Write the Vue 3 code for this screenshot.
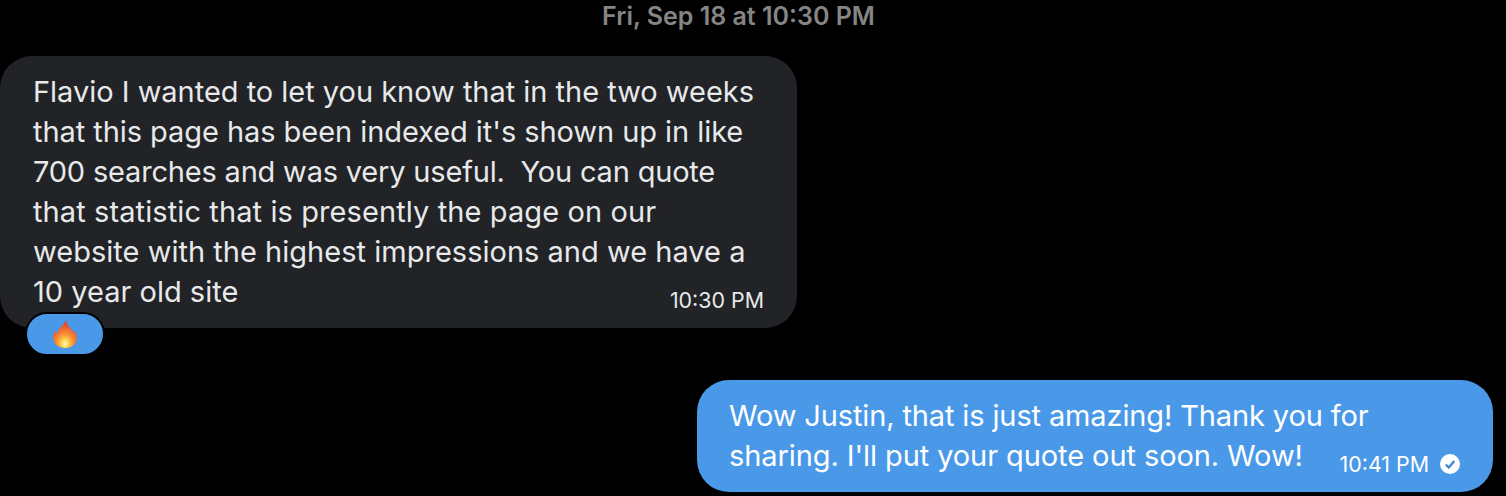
<script setup>
// tracking nudges per line, Inter runs a little differently from the original font
const firstLines = [
  { text: 'Flavio I wanted to let you know that in the two weeks', spacing: -0.02 },
  { text: "that this page has been indexed it's shown up in like", spacing: -0.06 },
  { text: '700 searches and was very useful.  You can quote', spacing: -0.19 },
  { text: 'that statistic that is presently the page on our', spacing: 0.1 },
  { text: 'website with the highest impressions and we have a', spacing: 0.02 }
]
</script>

<template>
  <div class="chat">
    <div class="date">Fri, Sep 18 at 10:30 PM</div>

    <div class="row">
      <div class="bubble them">
        <div
          v-for="line in firstLines"
          :key="line.text"
          class="line"
          :style="{ letterSpacing: line.spacing + 'px' }"
        >{{ line.text }}</div>
        <div class="line last">
          <span>10 year old site</span>
          <span class="time">10:30 PM</span>
        </div>
      </div>
      <div class="reaction">
        <svg width="24" height="30" viewBox="0 0 24 30">
          <defs>
            <radialGradient id="flame" cx="50%" cy="84%" r="72%">
              <stop offset="0" stop-color="#fffbd0" />
              <stop offset="0.2" stop-color="#ffd54f" />
              <stop offset="0.48" stop-color="#fb8f36" />
              <stop offset="1" stop-color="#e2452f" />
            </radialGradient>
          </defs>
          <path
            fill="url(#flame)"
            d="M13 1c.6 4 3 6.500 5.500 9.500 1 1.200 1.600 2.300 1.900 3.500.5-.7.8-1.500.9-2.500 1.700 2.500 2.700 5 2.500 8-.3 5.500-5 9.500-11.500 9.500C6 29 1 25.500.3 20c-.4-3 .5-5.700 2.400-8.500-.1 1.500.3 2.700 1.100 3.500C4.500 9.500 10.500 7 13 1z"
          />
        </svg>
      </div>
    </div>

    <div class="row me">
      <div class="bubble mine">
        <div class="line tight-a">Wow Justin, that is just amazing! Thank you for</div>
        <div class="line last">
          <span class="tight-b">sharing. I'll put your quote out soon. Wow!</span>
          <span class="meta">
            <span class="time">10:41 PM</span>
            <svg class="check" width="20" height="20" viewBox="0 0 20 20">
              <circle cx="10" cy="10" r="10" fill="#fff" />
              <path d="M5.800 10.500l3 3 5.500-6.500" fill="none" stroke="#3f8bd8" stroke-width="2.400" />
            </svg>
          </span>
        </div>
      </div>
    </div>
  </div>
</template>

<style scoped>
.chat {
  width: 1506px;
  height: 496px;
  box-sizing: border-box;
  padding-right: 13px;
  background: #000;
  color: #e7e9ea;
  font-family: Inter, "Liberation Sans", sans-serif;
  overflow: hidden;
}

.date {
  height: 56px;
  padding-top: 1px;
  box-sizing: border-box;
  padding-right: 16px;
  text-align: center;
  color: #858585;
  font-size: 25px;
  line-height: 30px;
  font-weight: 600;
}

.row {
  display: flex;
  flex-direction: column;
  align-items: flex-start;
}

.row.me {
  align-items: flex-end;
  margin-top: 24px;
}

.bubble {
  box-sizing: border-box;
  width: 797px;
  padding: 16px 33px;
  border-radius: 32px;
  font-size: 29px;
  line-height: 40px;
}

.them {
  background: #222327;
}

.mine {
  width: 796px;
  padding-left: 32px;
  background: #4a99e9;
  color: #fff;
}

.line {
  white-space: pre;
}

.tight-a {
  letter-spacing: -0.13px;
}

.tight-b {
  letter-spacing: -0.09px;
}

.last {
  display: flex;
  justify-content: space-between;
  align-items: flex-end;
}

.time {
  font-size: 21.400px;
  line-height: 24px;
}

.meta {
  display: flex;
  align-items: center;
  gap: 11px;
}

.reaction {
  display: flex;
  align-items: center;
  justify-content: center;
  box-sizing: border-box;
  width: 80px;
  height: 44px;
  margin: -16px 0 0 25px;
  border: 2px solid #000;
  border-radius: 22px;
  background: #4a99e9;
}
</style>

<style>
body {
  background: #000;
}
</style>
